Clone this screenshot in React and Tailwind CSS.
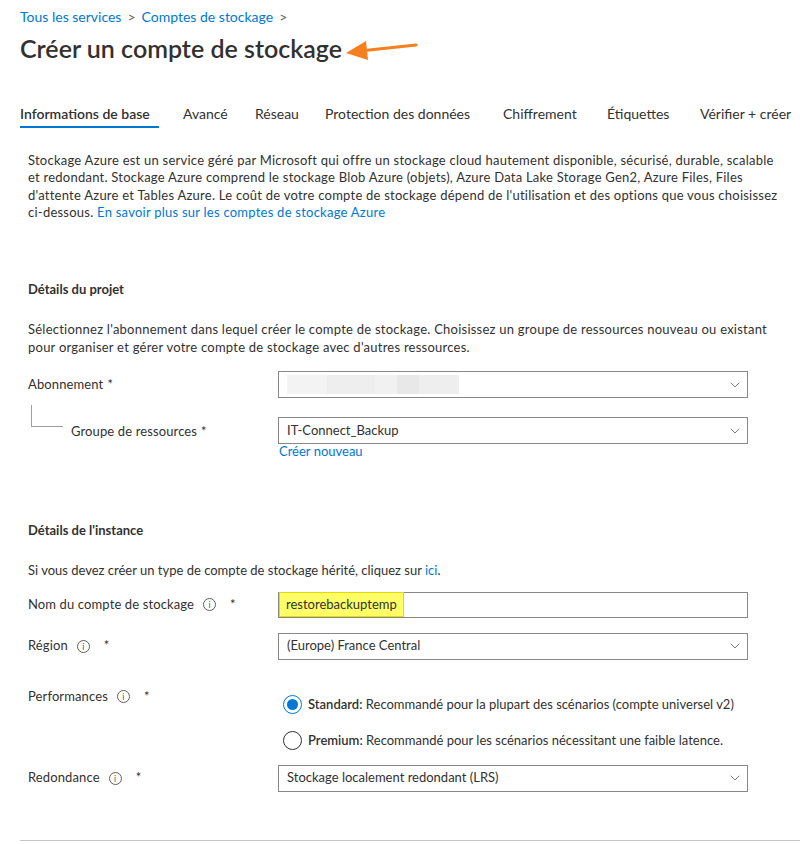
import { ChevronDown } from 'lucide-react';

const font = { fontFamily: 'Lato, "Noto Sans", sans-serif' };

const TABS = [
  { label: 'Informations de base', w: 'w-[163px]' },
  { label: 'Avancé', w: 'w-[72px]' },
  { label: 'Réseau', w: 'w-[70px]' },
  { label: 'Protection des données', w: 'w-[178px]' },
  { label: 'Chiffrement', w: 'w-[104px]' },
  { label: 'Étiquettes', w: 'w-[93px]' },
  { label: 'Vérifier + créer', w: 'w-[100px]' },
];

function Info() {
  return (
    <span className="inline-flex h-[13px] w-[13px] items-center justify-center rounded-full border border-[#605e5c] text-[9px] leading-none text-[#605e5c]">
      i
    </span>
  );
}

function Label({ children, info }) {
  return (
    <div className="flex items-center gap-[9px] text-[13px] tracking-[0.12px] text-[#323130]">
      <span>{children}</span>
      {info && <Info />}
      <span className={info ? 'ml-[5px]' : '-ml-[5px]'}>*</span>
    </div>
  );
}

function Select({ children }) {
  return (
    <div className="flex h-[27px] w-[470px] items-center justify-between border border-[#8a8886] pl-[8px] pr-[4px] text-[13px] text-[#323130]">
      <div className="flex items-center">{children}</div>
      <ChevronDown size={16} strokeWidth={1.2} className="text-[#605e5c]" />
    </div>
  );
}

export default function App() {
  return (
    <div className="min-h-[844px] w-[800px] overflow-hidden bg-white" style={font}>
      <div className="px-[20px] pt-[6px]">
        <div className="flex items-center gap-[6px] text-[14px] text-[#0078d4]">
          <span>Tous les services</span>
          <span className="text-[#605e5c]">&gt;</span>
          <span>Comptes de stockage</span>
          <span className="text-[#605e5c]">&gt;</span>
        </div>

        <div className="mt-[3px] flex items-center">
          <h1 className="text-[25px] font-semibold text-[#323130]">Créer un compte de stockage</h1>
          <svg width="80" height="24" viewBox="0 0 80 24" className="ml-[2px] mt-[2px]">
            <line x1="16" y1="13" x2="72" y2="7" stroke="#f7801e" strokeWidth="3" strokeLinecap="round" />
            <polygon points="2,15 22,3 24,22" fill="#f7801e" />
          </svg>
        </div>

        <div className="mt-[35px] flex whitespace-nowrap text-[14px] text-[#323130]">
          {TABS.map((t, i) => (
            <div key={t.label} className={`${t.w} shrink-0`}>
              <div className={i === 0 ? 'font-semibold' : ''}>{t.label}</div>
              {i === 0 && <div className="mt-[2px] h-[2px] w-[139px] bg-[#0078d4]" />}
            </div>
          ))}
        </div>
      </div>

      <div className="px-[28px]">
        <p className="mt-[24px] whitespace-nowrap text-[13px] leading-[17.5px] tracking-[0.24px] text-[#323130]">
          Stockage Azure est un service géré par Microsoft qui offre un stockage cloud hautement disponible, sécurisé, durable, scalable
          <br />
          et redondant. Stockage Azure comprend le stockage Blob Azure (objets), Azure Data Lake Storage Gen2, Azure Files, Files
          <br />
          d'attente Azure et Tables Azure. Le coût de votre compte de stockage dépend de l'utilisation et des options que vous choisissez
          <br />
          ci-dessous. <span className="text-[#0078d4]">En savoir plus sur les comptes de stockage Azure</span>
        </p>

        <h2 className="mt-[58px] text-[13px] font-bold text-[#323130]">Détails du projet</h2>
        <p className="mt-[21px] whitespace-nowrap text-[13px] leading-[18px] tracking-[0.24px] text-[#323130]">
          Sélectionnez l'abonnement dans lequel créer le compte de stockage. Choisissez un groupe de ressources nouveau ou existant
          <br />
          pour organiser et gérer votre compte de stockage avec d'autres ressources.
        </p>

        <div className="mt-[15px] flex items-center">
          <div className="w-[250px]">
            <Label>Abonnement</Label>
          </div>
          <Select>
            <div className="flex h-[19px]">
              <div className="w-[40px] bg-[#f3f3f3]" />
              <div className="w-[48px] bg-[#eeeeee]" />
              <div className="w-[22px] bg-[#f1f1f1]" />
              <div className="w-[22px] bg-[#e8e8e8]" />
              <div className="w-[40px] bg-[#eeeeee]" />
            </div>
          </Select>
        </div>

        <div className="flex">
          <div className="ml-[3px] mt-[7px] h-[22px] w-[32px] border-b border-l border-[#a19f9d]" />
        </div>
        <div className="-mt-[10px] flex items-start">
          <div className="w-[250px] pl-[43px] pt-[5px]">
            <Label>Groupe de ressources</Label>
          </div>
          <div>
            <Select>IT-Connect_Backup</Select>
            <div className="-mt-[2px] pl-[1px] text-[13px] text-[#0078d4]">Créer nouveau</div>
          </div>
        </div>

        <h2 className="mt-[59px] text-[13px] font-bold text-[#323130]">Détails de l'instance</h2>
        <p className="mt-[21px] text-[13px] text-[#323130]">
          Si vous devez créer un type de compte de stockage hérité, cliquez sur <span className="text-[#0078d4]">ici</span>.
        </p>

        <div className="mt-[11px] flex items-center">
          <div className="w-[250px]">
            <Label info>Nom du compte de stockage</Label>
          </div>
          <div className="flex h-[26px] w-[470px] items-center border border-[#8a8886] text-[13px] text-[#323130]">
            <span className="flex h-[25px] items-center border border-[#e8d800] bg-[#ffff66] px-[6px]">restorebackuptemp</span>
          </div>
        </div>

        <div className="mt-[15px] flex items-center">
          <div className="w-[250px]">
            <Label info>Région</Label>
          </div>
          <Select>(Europe) France Central</Select>
        </div>

        <div className="mt-[27px] flex items-start">
          <div className="w-[250px]">
            <Label info>Performances</Label>
          </div>
          <div className="flex flex-col gap-[17px] pl-[5px] pt-[8px] text-[13px] text-[#323130]">
            <div className="flex items-center gap-[6px]">
              <span className="flex h-[19px] w-[19px] items-center justify-center rounded-full border border-[#0078d4]">
                <span className="h-[11px] w-[11px] rounded-full bg-[#0078d4]" />
              </span>
              <span>
                <span className="font-semibold">Standard:</span> Recommandé pour la plupart des scénarios (compte universel v2)
              </span>
            </div>
            <div className="flex items-center gap-[6px]">
              <span className="h-[19px] w-[19px] rounded-full border border-[#323130]" />
              <span>
                <span className="font-semibold">Premium:</span> Recommandé pour les scénarios nécessitant une faible latence.
              </span>
            </div>
          </div>
        </div>

        <div className="mt-[14px] flex items-center">
          <div className="w-[250px]">
            <Label info>Redondance</Label>
          </div>
          <Select>Stockage localement redondant (LRS)</Select>
        </div>
      </div>

      <div className="ml-[20px] mt-[48px] h-px bg-[#c8c6c4]" />
    </div>
  );
}
